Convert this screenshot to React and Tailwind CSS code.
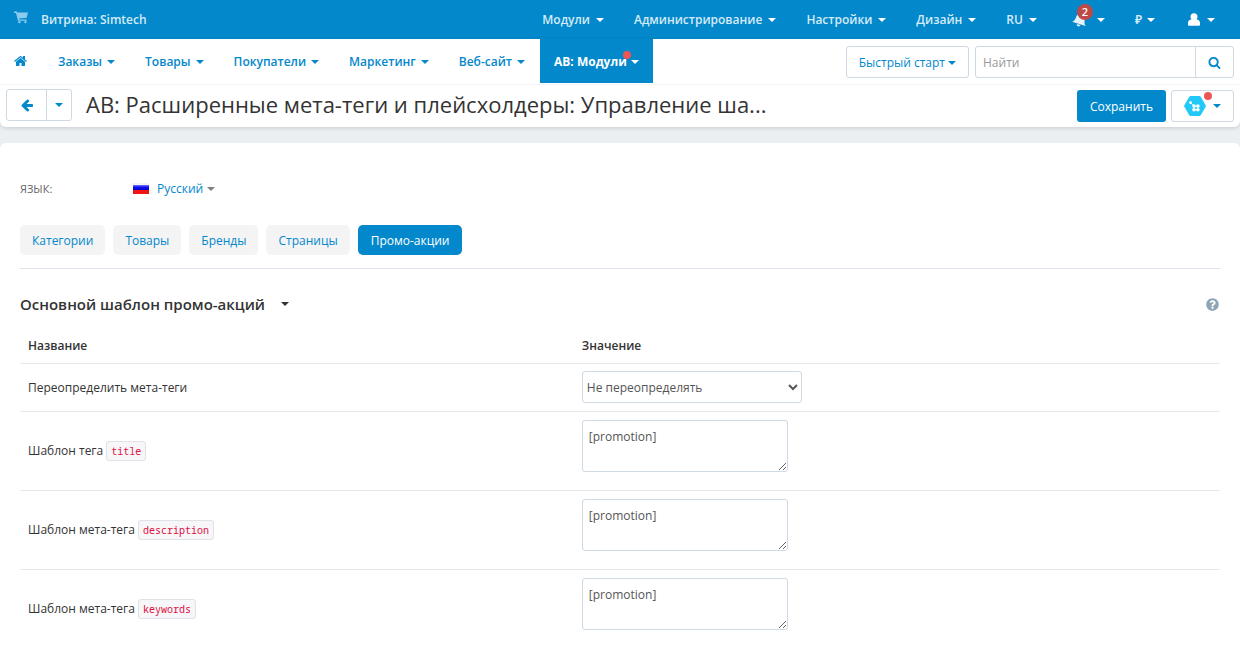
import React from "react";
import { FaQuestionCircle } from "react-icons/fa";

const ICONS = {
  home: "M1408 992v480q0 26-19 45t-45 19h-384v-384h-256v384h-384q-26 0-45-19t-19-45v-480q0-1 .5-3t.5-3l575-474 575 474q1 2 1 6zm223-69l-62 74q-8 9-21 11h-3q-13 0-21-7l-692-577-692 577q-12 8-24 7-13-2-21-11l-62-74q-8-10-7-23.5t11-21.5l719-599q32-26 76-26t76 26l244 204v-195q0-14 9-23t23-9h192q14 0 23 9t9 23v408l219 182q10 8 11 21.5t-7 23.5z",
  back: "M1664 896v128q0 53-32.5 90.5t-84.5 37.5h-704l293 294q38 36 38 90t-38 90l-75 76q-37 37-90 37-52 0-91-37l-651-652q-37-37-37-90 0-52 37-91l651-650q38-38 91-38 52 0 90 38l75 74q38 38 38 91t-38 91l-293 293h704q52 0 84.5 37.5t32.5 90.5z",
  search:
    "M1216 832q0-185-131.5-316.5t-316.5-131.5-316.5 131.5-131.5 316.5 131.5 316.5 316.5 131.5 316.5-131.5 131.5-316.5zm512 832q0 52-38 90t-90 38q-54 0-90-38l-343-342q-179 124-399 124-143 0-273.5-55.5t-225-150-150-225-55.5-273.5 55.5-273.5 150-225 225-150 273.5-55.5 273.5 55.5 225 150 150 225 55.5 273.5q0 220-124 399l343 343q37 37 37 90z",
};

function Glyph({ name, className }) {
  return (
    <svg viewBox="0 0 1792 1792" fill="currentColor" aria-hidden="true" className={className}>
      <path d={ICONS[name]} />
    </svg>
  );
}

function Caret({ className = "" }) {
  return (
    <svg viewBox="0 0 8 4" fill="currentColor" aria-hidden="true" className={`h-1 w-2 shrink-0 ${className}`}>
      <path d="M0 0h8L4 4z" />
    </svg>
  );
}

function CartIcon() {
  return (
    <svg viewBox="0 0 14 13" aria-hidden="true" className="h-[13px] w-[14px] text-[#8ccbed]">
      <path d="M0 0.500h2.800l.4 1.100H14L12.700 6.800 5 7.600l.2.900h7.500v1.300H4L2 1.900H0z" fill="currentColor" />
      <circle cx="5.400" cy="11.100" r="1.200" fill="currentColor" />
      <circle cx="11.400" cy="11.100" r="1.200" fill="currentColor" />
    </svg>
  );
}

function BellIcon() {
  return (
    <svg viewBox="0 0 16 16" fill="currentColor" aria-hidden="true" className="h-4 w-4 text-[#e6f3fa]">
      <g transform="rotate(17 8 8)">
        <path d="M8 .6c.8 0 1.200.5 1.200 1.200 2.300.6 3.400 2.300 3.400 4.600 0 2.900.9 4.300 2.600 5.600H.800C2.500 10.700 3.400 9.300 3.400 6.400c0-2.300 1.100-4 3.400-4.600 0-.7.4-1.200 1.200-1.200z" />
        <path d="M6.100 12.700h3.800a1.900 1.900 0 0 1-3.800 0z" />
      </g>
    </svg>
  );
}

function UserIcon() {
  return (
    <svg viewBox="0 0 12 13" fill="currentColor" aria-hidden="true" className="h-[13px] w-3">
      <path d="M6 .3c2.200 0 3.500 1.500 3.500 3.500 0 1.200-.4 2.100-1 2.800 2.200.2 3.500 1.300 3.500 3.600v1.400c0 .9-.5 1.200-1.300 1.200H1.300C.5 12.800 0 12.500 0 11.600v-1.400c0-2.300 1.300-3.400 3.500-3.600-.6-.7-1-1.600-1-2.800C2.500 1.800 3.800.3 6 .3z" />
    </svg>
  );
}

function AddonIcon() {
  return (
    <svg viewBox="0 0 22 20" aria-hidden="true" className="h-5 w-[22px]">
      <path
        d="M6.600 1.600h8.800L20.400 10l-5 8.400H6.600L1.600 10z"
        fill="#22c8f8"
        stroke="#22c8f8"
        strokeWidth="3"
        strokeLinejoin="round"
      />
      <g fill="#fff">
        <circle cx="6.500" cy="6.600" r="1.400" />
        <circle cx="10" cy="10" r="1.800" />
        <circle cx="13.900" cy="10" r="1.800" />
        <circle cx="10" cy="13.800" r="1.800" />
        <circle cx="13.900" cy="13.800" r="1.800" />
      </g>
      <path d="M6.500 6.600L10 10M10 10h3.900v3.800H10z" stroke="#fff" strokeWidth=".8" fill="none" />
    </svg>
  );
}

function RussianFlag() {
  return (
    <svg viewBox="0 0 16 11" aria-hidden="true" className="mb-[2px] h-[11px] w-4">
      <defs>
        <linearGradient id="flag-blue" x1="0" y1="0" x2="0" y2="1">
          <stop offset="0" stopColor="#7c7cff" />
          <stop offset=".4" stopColor="#1414f5" />
          <stop offset="1" stopColor="#0000c8" />
        </linearGradient>
      </defs>
      <rect width="16" height="11" fill="#f3f3f7" />
      <rect y="2" width="16" height="5" fill="url(#flag-blue)" />
      <rect y="7" width="16" height="4" fill="#f01414" />
    </svg>
  );
}

const topMenu = ["Модули", "Администрирование", "Настройки", "Дизайн", "RU"];
const mainMenu = ["Заказы", "Товары", "Покупатели", "Маркетинг", "Веб-сайт"];
const tabs = ["Категории", "Товары", "Бренды", "Страницы", "Промо-акции"];
const templates = [
  { id: "title", label: "Шаблон тега" },
  { id: "description", label: "Шаблон мета-тега" },
  { id: "keywords", label: "Шаблон мета-тега" },
];

function TopBar() {
  return (
    <header className="flex h-[39px] items-center justify-between bg-[#0388cc] pr-[10px] pl-[14px] text-[#d5ebf7]">
      <a href="#store" className="flex items-center gap-[13px] font-semibold">
        <span className="pb-1">
          <CartIcon />
        </span>
        <span>Витрина: Simtech</span>
      </a>
      <nav className="flex items-center font-semibold">
        {topMenu.map((item) => (
          <button key={item} type="button" className="flex items-center gap-[6px] px-[15px]">
            {item}
            <Caret className="text-white" />
          </button>
        ))}
        <button type="button" aria-label="Уведомления" className="flex items-center gap-[9px] pr-[15px] pl-5">
          <span className="relative">
            <BellIcon />
            <span className="absolute -top-2 left-[5px] flex size-4 items-center justify-center rounded-full bg-[#bd4a48] text-[11px] leading-4 text-white">
              2
            </span>
          </span>
          <Caret className="text-white" />
        </button>
        <button type="button" className="flex items-center gap-[5px] px-[15px]">
          ₽
          <Caret className="text-white" />
        </button>
        <button type="button" aria-label="Профиль" className="flex items-center gap-[7px] px-[15px] pl-[18px] text-white">
          <UserIcon />
          <Caret />
        </button>
      </nav>
    </header>
  );
}

function MainNav() {
  return (
    <div className="flex h-[46px] items-start justify-between border-b border-[#f3f4f5] pr-[6px] text-[#0388cc]">
      <nav className="flex h-11 items-center font-semibold">
        <a href="#home" aria-label="Главная" className="pr-[15px] pl-[14px]">
          <Glyph name="home" className="size-[14px]" />
        </a>
        {mainMenu.map((item) => (
          <button key={item} type="button" className="flex h-full items-center gap-[5px] px-[15px] pt-[2px]">
            {item}
            <Caret />
          </button>
        ))}
        <button type="button" className="flex h-full items-center gap-1 bg-[#0388cc] px-[14px] pt-[2px] font-bold text-white">
          <span className="relative">
            АВ: Модули
            <span className="absolute -right-1 -top-[1px] size-2 rounded-full bg-[#ee5555]" />
          </span>
          <Caret />
        </button>
      </nav>
      <div className="flex gap-[6px] pt-[7px]">
        <button
          type="button"
          className="flex h-8 items-center gap-[3px] rounded-[3px] border border-[#cfd9e3] bg-white px-3 pt-[2px]"
        >
          Быстрый старт
          <Caret />
        </button>
        <form role="search" className="flex h-8 w-[259px] overflow-hidden rounded-[3px] border border-[#cfd9e3] bg-white">
          <input
            type="search"
            aria-label="Найти"
            placeholder="Найти"
            className="min-w-0 flex-1 px-[7px] pt-[2px] outline-none placeholder:text-[#999999]"
          />
          <button
            type="button"
            aria-label="Искать"
            className="flex w-[38px] items-center justify-center border-l border-[#cfd9e3]"
          >
            <Glyph name="search" className="size-[13px]" />
          </button>
        </form>
      </div>
    </div>
  );
}

function TitleBar() {
  return (
    <div className="flex h-[42px] items-start gap-[14px] px-[6px] pt-1 text-[#0388cc]">
      <div className="flex h-8 shrink-0 rounded-[3px] border border-[#cfd9e3]">
        <button type="button" aria-label="Назад" className="flex w-10 items-center justify-center border-r border-[#cfd9e3]">
          <Glyph name="back" className="size-[14px]" />
        </button>
        <button type="button" aria-label="История" className="flex w-6 items-center justify-center">
          <Caret />
        </button>
      </div>
      <h1 className="flex-1 text-[22px] leading-[30px] text-[#333333]">
        АВ: Расширенные мета-теги и плейсхолдеры: Управление ша...
      </h1>
      <div className="flex shrink-0 gap-[5px] pt-[1px]">
        <button type="button" className="h-8 rounded-[3px] bg-[#0388cc] px-[13px] pt-[2px] text-white">
          Сохранить
        </button>
        <button
          type="button"
          aria-label="Действия"
          className="flex h-8 items-center gap-[7px] rounded-[3px] border border-[#cfd9e3] px-3"
        >
          <span className="relative">
            <AddonIcon />
            <span className="absolute -right-[6px] -top-1 size-2 rounded-full bg-[#ee5555]" />
          </span>
          <Caret />
        </button>
      </div>
    </div>
  );
}

function TemplateTable() {
  return (
    <table className="w-full table-fixed border-collapse text-left">
      <thead>
        <tr className="h-9 border-b border-[#e6e8ea]">
          <th className="w-6/13 px-2 pt-[2px] font-semibold">Название</th>
          <th className="px-2 pt-[2px] font-semibold">Значение</th>
        </tr>
      </thead>
      <tbody>
        <tr className="h-12 border-b border-[#e6e8ea]">
          <td className="px-2 pt-[2px]">
            <label htmlFor="override">Переопределить мета-теги</label>
          </td>
          <td className="px-2">
            <select
              id="override"
              className="block h-8 w-[220px] rounded-[3px] border border-[#cfd9e3] bg-white text-[#555555]"
            >
              <option>Не переопределять</option>
              <option>Переопределять</option>
            </select>
          </td>
        </tr>
        {templates.map(({ id, label }) => (
          <tr key={id} className="border-b border-[#e6e8ea] last:border-b-0">
            <td className="px-2">
              <label htmlFor={id}>
                {label}{" "}
                <code className="rounded-[3px] border border-[#e1e1e8] bg-[#f7f7f9] px-1 py-[2px] font-['Noto_Sans_Mono','DejaVu_Sans_Mono',monospace] text-[10px] text-[#dd1144]">
                  {id}
                </code>
              </label>
            </td>
            <td className="px-2 pt-2 pb-[18px]">
              <textarea
                id={id}
                defaultValue="[promotion]"
                className="block h-[52px] w-[206px] rounded-[3px] border border-[#cfd9e3] px-[6px] py-[6px] text-[#555555]"
              />
            </td>
          </tr>
        ))}
      </tbody>
    </table>
  );
}

export default function App() {
  return (
    <div className="min-h-screen bg-[#eceff1] font-['Open_Sans','Noto_Sans',sans-serif] text-xs leading-5 text-[#333333]">
      <TopBar />
      <div className="rounded-b-md bg-white shadow-[0_1px_4px_rgba(0,0,0,0.15)]">
        <MainNav />
        <TitleBar />
      </div>
      <main className="mt-4 min-h-[527px] rounded-t-md bg-white px-5 pt-9">
        <div className="flex h-5 items-center">
          <span className="w-[113px] text-[11px] text-[#666666] uppercase">Язык:</span>
          <button type="button" className="flex items-center text-[#0388cc]">
            <RussianFlag />
            <span className="ml-2">Русский</span>
            <Caret className="ml-1 text-[#808080]" />
          </button>
        </div>
        <nav className="mt-[26px] flex gap-2 border-b border-[#dfe5ec] pb-[13px]">
          {tabs.map((tab) => (
            <a
              key={tab}
              href="#tab"
              aria-current={tab === "Промо-акции" ? "page" : undefined}
              className="flex h-[30px] items-center rounded-[5px] bg-[#f4f4f5] px-3 pt-[2px] text-[#0388cc] aria-[current=page]:bg-[#0388cc] aria-[current=page]:px-[13px] aria-[current=page]:text-white"
            >
              {tab}
            </a>
          ))}
        </nav>
        <section>
          <div className="flex items-center justify-between pt-[23px]">
            <h2 className="text-[15px] leading-6 font-semibold">
              <button type="button" className="flex items-center gap-4">
                Основной шаблон промо-акций
                <Caret />
              </button>
            </h2>
            <button type="button" aria-label="Справка" className="text-[#8fa5b5]">
              <FaQuestionCircle className="mr-[1px] size-[13px]" />
            </button>
          </div>
          <div className="pt-[11px]">
            <TemplateTable />
          </div>
        </section>
      </main>
    </div>
  );
}
